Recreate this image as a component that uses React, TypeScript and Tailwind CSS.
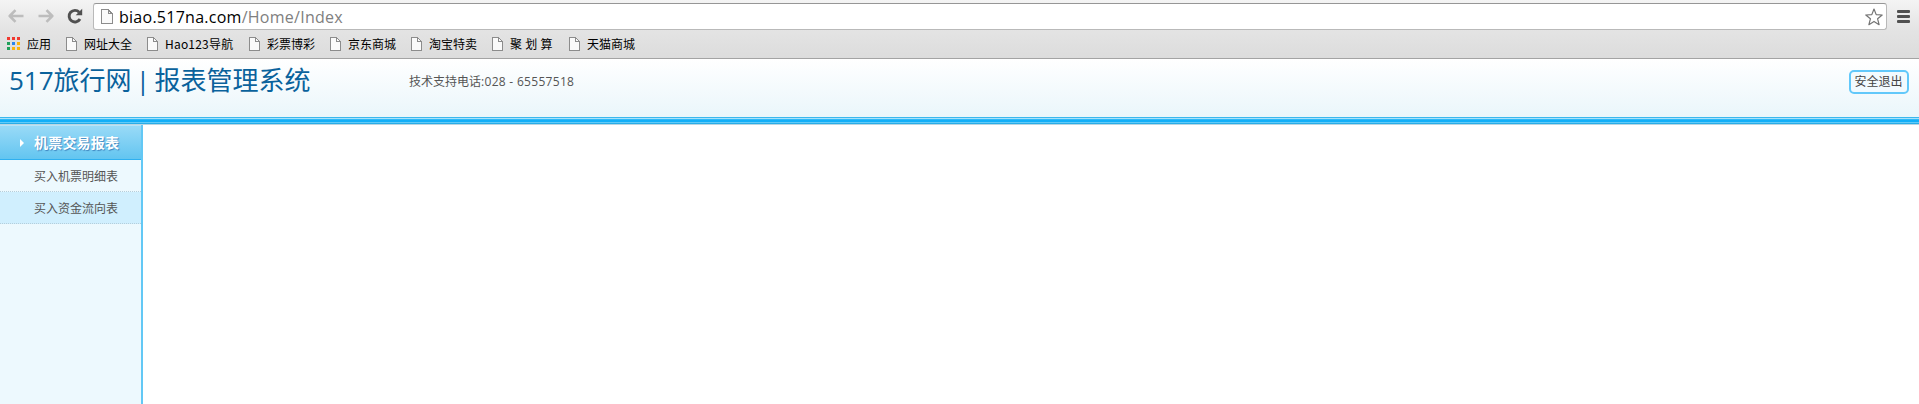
import React from "react";

const bookmarks = [
  { label: "网址大全", width: "w-[48px]" },
  { label: "Hao123导航", width: "w-[69px] tracking-[0.2px]" },
  { label: "彩票博彩", width: "w-[48px]" },
  { label: "京东商城", width: "w-[48px]" },
  { label: "淘宝特卖", width: "w-[48px]" },
  { label: "聚 划 算", width: "w-[44px] [word-spacing:0.5px]" },
  { label: "天猫商城", width: "w-[48px]" },
];

const appDots = [
  "bg-[#f03a30]", "bg-[#f03a30]", "bg-[#f03a30]",
  "bg-[#1fa05a]", "bg-[#2a86f0]", "bg-[#fbb30c]",
  "bg-[#1fa05a]", "bg-[#fbb30c]", "bg-[#fbb30c]",
];

function PageIcon({ className }: { className: string }) {
  return (
    <svg viewBox="0 0 11 14" className={className} fill="#fafafa" stroke="#8c8c8c" shapeRendering="crispEdges">
      <path d="M.5 .5H6.5L10.5 4.5V13.5H.5Z" />
      <path d="M6.5 .5V4.5H10.5" fill="none" />
    </svg>
  );
}

function Arrow({ className }: { className: string }) {
  return (
    <svg viewBox="0 0 16 14" className={className} fill="none" stroke="#bdbdbd" strokeWidth="2.6" strokeLinejoin="round">
      <path d="M15.5 7H2M7.5 1.2L1.7 7L7.5 12.8" />
    </svg>
  );
}

function BrowserChrome() {
  return (
    <div className="h-[59px] border-b border-[#a3a3a3] bg-linear-to-b from-[#f4f4f4] via-[#e4e4e4] to-[#dcdcdc]">
      <div className="flex h-[30px] pl-2 pt-[3px]">
        <Arrow className="mt-[6px] h-[14px] w-4 shrink-0" />
        <Arrow className="ml-[14px] mt-[6px] h-[14px] w-4 shrink-0 rotate-180" />
        <svg viewBox="0 0 16 16" className="ml-[13px] mt-[5px] size-4 shrink-0">
          <path d="M13 11A5.8 5.8 0 1 1 12.2 4.2" fill="none" stroke="#505050" strokeWidth="2.9" />
          <path d="M15.2 .8V7.3H8.7Z" fill="#505050" />
        </svg>
        <div className="ml-[10px] flex h-[27px] w-[1794px] shrink-0 items-start rounded-[3px] border border-[#b9b9b9] border-t-[#969696] bg-white pl-[7px]">
          <PageIcon className="mt-[5px] h-[15px] w-[12px] shrink-0" />
          <div className="ml-[6px] whitespace-nowrap font-['Open_Sans','Noto_Sans',sans-serif] text-[16px] leading-[26px] tracking-[0.26px] text-[#808080]">
            <span className="text-black">biao.517na.com</span>/Home/Index
          </div>
          <svg viewBox="0 0 18 18" className="ml-auto mr-[3px] mt-[4px] size-[18px] shrink-0" fill="none" stroke="#747474" strokeWidth="1.2" strokeLinejoin="round">
            <path d="M9 1L11.2 6.6L17.2 7L12.6 10.8L14.1 16.7L9 13.4L3.9 16.7L5.4 10.8L.8 7L6.8 6.6Z" />
          </svg>
        </div>
        <div className="ml-[10px] mt-[7px] flex w-[13px] flex-col gap-[2px]">
          <i className="h-[3px] rounded-[1px] bg-[#505050]" />
          <i className="h-[3px] rounded-[1px] bg-[#505050]" />
          <i className="h-[3px] rounded-[1px] bg-[#505050]" />
        </div>
      </div>
      <div className="flex h-7 items-start pl-[7px] pt-[5px] font-['Noto_Sans_CJK_SC',sans-serif] text-[12px] leading-[18px] text-black">
        <div className="mt-[2px] grid grid-cols-[3px_3px_3px] gap-[2px]">
          {appDots.map((color, i) => (
            <i key={i} className={`size-[3px] ${color}`} />
          ))}
        </div>
        <span className="ml-[7px] w-6 whitespace-nowrap">应用</span>
        {bookmarks.map((b) => (
          <div key={b.label} className="ml-[15px] flex">
            <PageIcon className="mt-[2px] h-[14px] w-[11px] shrink-0" />
            <span className={`ml-[7px] whitespace-nowrap ${b.width}`}>{b.label}</span>
          </div>
        ))}
      </div>
    </div>
  );
}

function Header() {
  return (
    <header>
      <div className="flex h-[58px] items-start bg-linear-to-b from-white to-[#eaf6fb]">
        <h1 className="ml-[9px] w-[400px] whitespace-nowrap pt-[3px] font-['Open_Sans','Noto_Sans_CJK_SC',sans-serif] text-[26px] leading-[36px] text-[#0a629c] [word-spacing:-2.5px]">
          517旅行网 | 报表管理系统
        </h1>
        <p className="whitespace-nowrap pt-[13px] font-['Open_Sans','Noto_Sans_CJK_SC',sans-serif] text-[12px] leading-[20px] text-[#555]">
          技术支持电话<span className="tracking-[0.3px]">:028 - 65557518</span>
        </p>
        <button className="ml-auto mr-[10px] mt-[11px] flex h-[24px] w-[60px] justify-center whitespace-nowrap rounded-[5px] border-2 border-[#62c8fa] bg-[#f2fafe] pr-px font-['Noto_Sans_CJK_SC',sans-serif] text-[12px] leading-[18px] text-[#444]">
          安全退出
        </button>
      </div>
      <div className="h-px bg-[#3ab8ee]" />
      <div className="h-px bg-[#a8e2fb]" />
      <div className="h-px bg-[#2fb9f8]" />
      <div className="h-[2px] bg-[#12aff8]" />
      <div className="h-px bg-[#62cbf8]" />
      <div className="h-px bg-[#28ade8]" />
      <div className="h-px bg-[#b9d6e2]" />
    </header>
  );
}

function Sidebar() {
  return (
    <aside className="w-[143px] border-r-2 border-[#62c8f5] bg-[#edf9fe] font-['Noto_Sans_CJK_SC',sans-serif] text-[12px] text-[#555]">
      <div className="flex h-[35px] items-center border-b border-[#2fb0f0] border-t border-t-[#b8e4f8] bg-linear-to-b from-[#98daf7] to-[#62c5f0] pl-5">
        <svg viewBox="0 0 4 8" className="mt-px h-2 w-1">
          <path d="M0 0L4 4L0 8Z" fill="white" />
        </svg>
        <span className="ml-[10px] whitespace-nowrap text-[14px] font-bold tracking-[0.2px] text-white [text-shadow:1px_1px_1px_#3f86c0]">机票交易报表</span>
      </div>
      <a className="block h-[32px] border-b border-dotted border-[#b5cedb] pl-[34px] leading-[31px]">买入机票明细表</a>
      <a className="block h-[32px] border-b border-dotted border-[#b5cedb] bg-[#d0effe] pl-[34px] leading-[31px]">买入资金流向表</a>
    </aside>
  );
}

export default function App() {
  return (
    <div className="flex h-[404px] flex-col overflow-hidden bg-white">
      <BrowserChrome />
      <Header />
      <div className="flex flex-1">
        <Sidebar />
        <main className="flex-1 bg-white" />
      </div>
    </div>
  );
}
